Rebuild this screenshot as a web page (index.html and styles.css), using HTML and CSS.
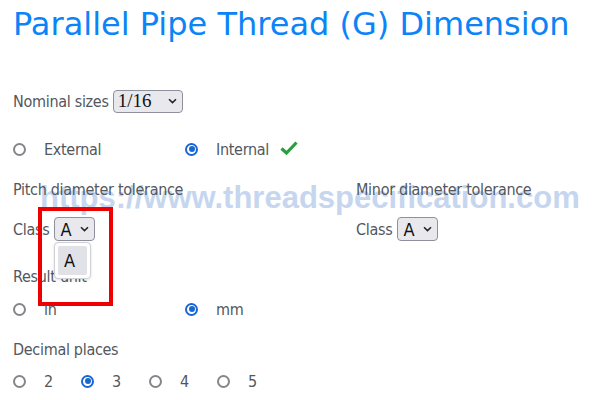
FILE: index.html
```html
<!DOCTYPE html>
<html lang="en">
<head>
<meta charset="utf-8">
<title>Parallel Pipe Thread (G) Dimension</title>
<link rel="stylesheet" href="styles.css">
</head>
<body>
<div class="page">
  <h1 class="title">Parallel Pipe Thread (G) Dimension</h1>

  <div class="row row-nominal">
    <span class="label">Nominal sizes</span>
    <span class="select select-size"><span class="select-value serif">1/16</span><svg class="chev" width="9" height="6" viewBox="0 0 9 6"><path d="M1 1.2 L4.5 4.6 L8 1.2" fill="none" stroke="#222" stroke-width="1.5"/></svg></span>
  </div>

  <div class="row row-options">
    <label class="opt opt-wide"><span class="radio"></span><span>External</span></label>
    <label class="opt opt-wide"><span class="radio on"></span><span>Internal</span>
      <svg class="check" width="18" height="14" viewBox="0 0 18 14"><path d="M1.5 7.5 L6.5 12 L16.5 1.5" fill="none" stroke="#2a9d3f" stroke-width="3.2" stroke-linejoin="miter"/></svg>
    </label>
  </div>

  <div class="tol-grid">
    <div class="tol-col">
      <div class="row"><span class="label">Pitch diameter tolerance</span></div>
      <div class="row">
        <span class="label">Class</span>
        <span class="select select-class"><span class="select-value">A</span><svg class="chev" width="9" height="6" viewBox="0 0 9 6"><path d="M1 1.2 L4.5 4.6 L8 1.2" fill="none" stroke="#222" stroke-width="1.5"/></svg></span>
      </div>
    </div>
    <div class="tol-col">
      <div class="row"><span class="label">Minor diameter tolerance</span></div>
      <div class="row">
        <span class="label">Class</span>
        <span class="select select-class"><span class="select-value">A</span><svg class="chev" width="9" height="6" viewBox="0 0 9 6"><path d="M1 1.2 L4.5 4.6 L8 1.2" fill="none" stroke="#222" stroke-width="1.5"/></svg></span>
      </div>
    </div>
  </div>

  <div class="row row-result"><span class="label">Result unit</span></div>
  <div class="row row-options">
    <label class="opt opt-wide"><span class="radio"></span><span>in</span></label>
    <label class="opt opt-wide"><span class="radio on"></span><span>mm</span></label>
  </div>

  <div class="row"><span class="label">Decimal places</span></div>
  <div class="row row-last">
    <label class="opt opt-num"><span class="radio"></span><span>2</span></label>
    <label class="opt opt-num"><span class="radio on"></span><span>3</span></label>
    <label class="opt opt-num"><span class="radio"></span><span>4</span></label>
    <label class="opt opt-num"><span class="radio"></span><span>5</span></label>
  </div>
</div>

<div class="watermark">https://www.threadspecification.com</div>

<div class="dropdown"><span class="dropdown-item">A</span></div>
<div class="highlight"></div>
</body>
</html>
```

FILE: styles.css
```css
html, body {
  margin: 0;
  padding: 0;
  background: #ffffff;
}

body {
  width: 600px;
  height: 400px;
  overflow: hidden;
  position: relative;
  font-family: "DejaVu Sans Condensed", "DejaVu Sans", sans-serif;
  font-stretch: condensed;
  color: #53575d;
}

.page {
  position: relative;
  z-index: 1;
  padding-left: 13px;
}

.title {
  margin: 0;
  height: 81px;
  font-family: "DejaVu Sans", sans-serif;
  font-stretch: normal;
  font-size: 32px;
  line-height: 48px;
  font-weight: normal;
  color: #0b84f7;
  letter-spacing: 0;
  white-space: nowrap;
}

.row {
  height: 40px;
  display: flex;
  align-items: center;
  font-size: 16px;
  letter-spacing: -0.3px;
}

.row-nominal + .row-options {
  margin-top: 8px;
}

.row-result {
  margin-top: 7px;
  margin-bottom: -7px;
}

.row-last {
  height: 24px;
}

.label {
  white-space: nowrap;
}

.select {
  display: inline-flex;
  align-items: center;
  box-sizing: border-box;
  background: #e9e9ed;
  border: 1px solid #8f8f9d;
  border-radius: 4px;
  color: #111;
  letter-spacing: 0;
}

.select-size {
  margin-left: 4px;
  width: 70px;
  height: 23px;
  padding-left: 4px;
}

.select-size .select-value {
  font-family: "Liberation Serif", serif;
  font-size: 19px;
  width: 50px;
}

.select-class {
  margin-left: 5px;
  width: 41px;
  height: 24px;
  padding-left: 5px;
}

.select-class .select-value {
  font-size: 18px;
  width: 20px;
}

.chev {
  display: block;
}

.tol-grid {
  display: grid;
  grid-template-columns: 343px 1fr;
}

.opt {
  display: inline-flex;
  align-items: center;
}

.opt-wide {
  width: 172px;
}

.opt-num {
  width: 68px;
}

.radio {
  box-sizing: border-box;
  width: 13px;
  height: 13px;
  border-radius: 50%;
  border: 2px solid #85858b;
  margin-right: 18px;
  flex: none;
  position: relative;
}

.radio.on {
  border: 2px solid #1967d2;
}

.radio.on::after {
  content: "";
  position: absolute;
  left: 1.5px;
  top: 1.5px;
  width: 6px;
  height: 6px;
  border-radius: 50%;
  background: #1967d2;
}

.check {
  display: block;
  margin-left: 11px;
  margin-top: -3px;
}

.watermark {
  position: absolute;
  z-index: 0;
  left: 40px;
  top: 178px;
  font-family: "Liberation Sans", Arial, sans-serif;
  font-weight: bold;
  font-size: 31px;
  line-height: 40px;
  color: #c6d6ef;
  white-space: nowrap;
}

.dropdown {
  position: absolute;
  z-index: 2;
  left: 54px;
  top: 242px;
  width: 37px;
  height: 37px;
  box-sizing: border-box;
  background: #ffffff;
  border: 1px solid #cfcfd4;
  border-radius: 4px;
  box-shadow: 0 1px 3px rgba(0, 0, 0, 0.12);
  padding: 3px;
}

.dropdown-item {
  display: flex;
  align-items: center;
  box-sizing: border-box;
  width: 29px;
  height: 29px;
  padding-left: 6px;
  background: #e1e1e8;
  border-radius: 2px;
  font-size: 18px;
  color: #111;
}

.highlight {
  position: absolute;
  z-index: 3;
  left: 38px;
  top: 207px;
  width: 75px;
  height: 99px;
  box-sizing: border-box;
  border: 4px solid #ee0000;
}
```
